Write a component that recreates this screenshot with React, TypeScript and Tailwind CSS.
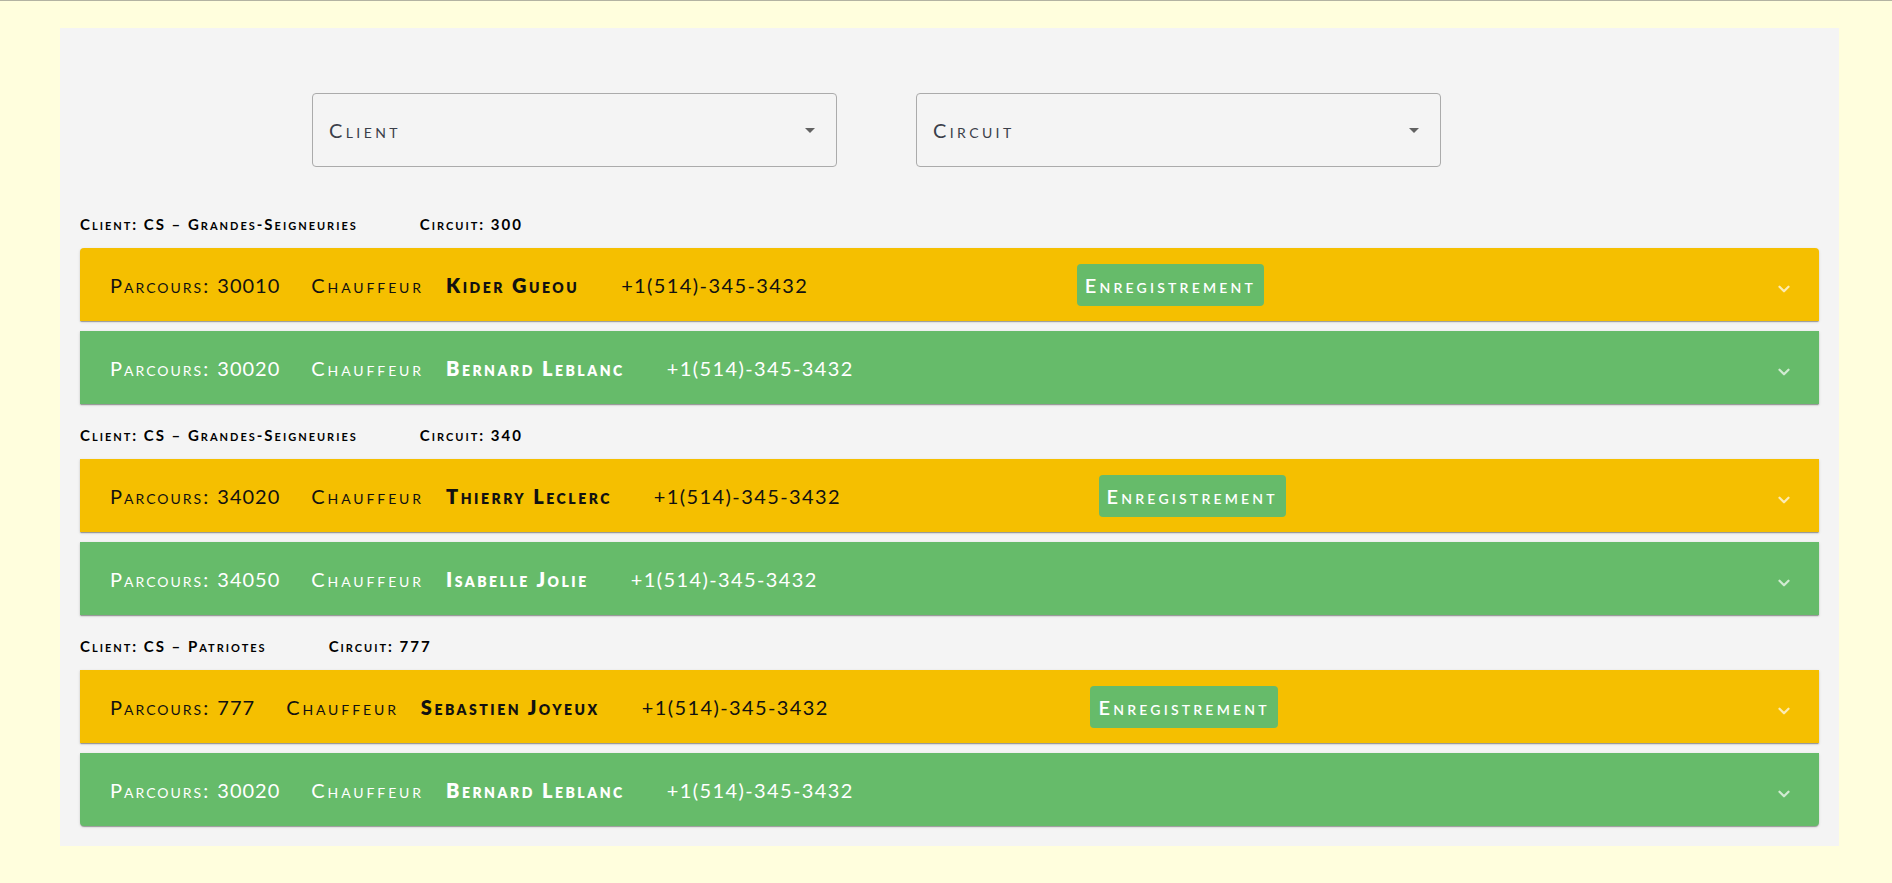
import { ChevronDown } from 'lucide-react'

interface Trip {
  parcours: string
  driver: string
  phone: string
  pending: boolean
}

interface Group {
  client: string
  circuit: string
  trips: Trip[]
}

const groups: Group[] = [
  {
    client: 'CS – Grandes-Seigneuries',
    circuit: '300',
    trips: [
      { parcours: '30010', driver: 'Kider Gueou', phone: '+1(514)-345-3432', pending: true },
      { parcours: '30020', driver: 'Bernard Leblanc', phone: '+1(514)-345-3432', pending: false },
    ],
  },
  {
    client: 'CS – Grandes-Seigneuries',
    circuit: '340',
    trips: [
      { parcours: '34020', driver: 'Thierry Leclerc', phone: '+1(514)-345-3432', pending: true },
      { parcours: '34050', driver: 'Isabelle Jolie', phone: '+1(514)-345-3432', pending: false },
    ],
  },
  {
    client: 'CS – Patriotes',
    circuit: '777',
    trips: [
      { parcours: '777', driver: 'Sebastien Joyeux', phone: '+1(514)-345-3432', pending: true },
      { parcours: '30020', driver: 'Bernard Leblanc', phone: '+1(514)-345-3432', pending: false },
    ],
  },
]

function SelectBox({ label }: { label: string }) {
  return (
    <div className="relative flex h-[74px] w-[525px] items-center rounded-[4px] border border-[#ababab] pl-[16px]">
      <span className="text-[20px] tracking-[3.4px] text-[#3b3f4a] [font-variant:small-caps]">
        {label}
      </span>
      {/* arrow */}
      <svg
        className="absolute right-[14px] top-1/2 h-6 w-6 -translate-y-1/2 text-black/60"
        viewBox="0 0 24 24"
        fill="currentColor"
      >
        <path d="M7 10l5 5 5-5z" />
      </svg>
    </div>
  )
}

function TripRow({ trip, first, last }: { trip: Trip; first: boolean; last: boolean }) {
  const color = trip.pending ? 'bg-[#f5bf00] text-[#111]' : 'bg-[#66bb6a] text-white'
  const corners = first ? 'rounded-t-[4px]' : last ? 'rounded-b-[4px]' : ''

  return (
    <div
      className={`relative flex h-[73px] items-center pl-[30px] pr-[18px] text-[20px] [font-variant:small-caps] shadow-[0_2px_1px_-1px_rgba(0,0,0,0.2),0_1px_1px_0_rgba(0,0,0,0.14),0_1px_3px_0_rgba(0,0,0,0.12)] ${color} ${corners}`}
    >
      <span className="mr-[31px] whitespace-nowrap tracking-[2px]">
        Parcours: <span className="tracking-[1px]">{trip.parcours}</span>
      </span>
      <span className="mr-[22px] tracking-[2.9px]">Chauffeur</span>
      <span className="mr-[42px] whitespace-nowrap font-extrabold tracking-[2.5px]">{trip.driver}</span>
      <span className="whitespace-nowrap tracking-[1.4px]">{trip.phone}</span>

      {trip.pending && (
        <div className="flex flex-1 justify-evenly">
          <button className="h-[42px] rounded-[4px] bg-[#66bb6a] px-[8px] text-[20px] font-semibold tracking-[3.2px] text-white [font-variant:small-caps]">
            Enregistrement
          </button>
          <span />
        </div>
      )}

      {/* expand icon */}
      <ChevronDown
        className="absolute right-[26px] top-1/2 mt-[4px] -translate-y-1/2 text-white/70"
        size={18}
        strokeWidth={3}
      />
    </div>
  )
}

export default function App() {
  return (
    <div
      className="min-h-screen border-t border-[#b3b3a2] bg-[#fffedd] pt-[27px]"
      style={{ fontFamily: 'Lato, "Open Sans", sans-serif' }}
    >
      <div className="ml-[60px] flex w-[1779px] flex-col bg-[#f4f4f4] px-[20px] pb-[20px] pt-[65px]">
        {/* Filters */}
        <div className="mb-[26px] flex gap-[79px] pl-[232px]">
          <SelectBox label="Client" />
          <SelectBox label="Circuit" />
        </div>

        {/* Groups */}
        {groups.map((group, gi) => (
          <div key={gi} className="flex flex-col">
            <div className="mb-[14px] mt-[21px] flex h-5 items-center text-[15px] font-bold tracking-[2px] text-black [font-variant:small-caps]">
              <span className="mr-[62px]">Client: {group.client}</span>
              <span>Circuit: {group.circuit}</span>
            </div>
            <div className="flex flex-col gap-[10px]">
              {group.trips.map((trip, ti) => (
                <TripRow
                  key={ti}
                  trip={trip}
                  first={gi === 0 && ti === 0}
                  last={gi === groups.length - 1 && ti === group.trips.length - 1}
                />
              ))}
            </div>
          </div>
        ))}
      </div>
    </div>
  )
}
